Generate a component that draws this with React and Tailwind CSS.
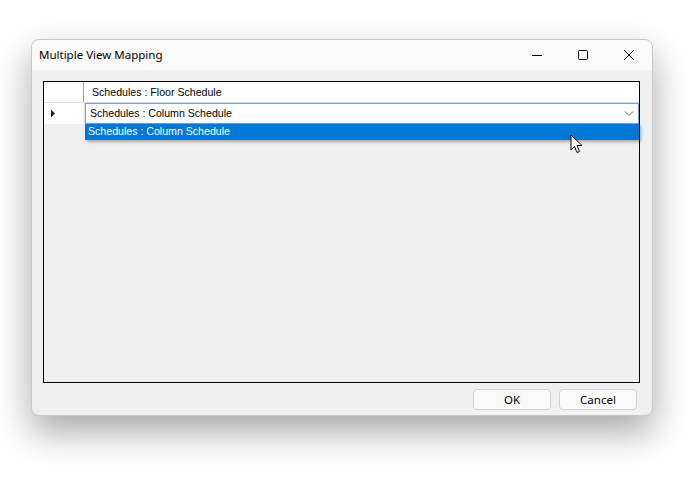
import React from 'react';

const font = { fontFamily: '"Liberation Sans", Arial, sans-serif' };
const uiFont = { fontFamily: '"Noto Sans", "Open Sans", sans-serif' };

const TitleBar = () => (
    <div className="h-[30px] flex items-center justify-between bg-[#fafafa] rounded-t-[8px]">
        <span className="pl-[7px] text-[11.5px] text-black" style={uiFont}>
            Multiple View Mapping
        </span>
        <div className="flex h-full">
            <div className="w-[46px] h-full flex items-center justify-center">
                <svg width="12" height="12" viewBox="0 0 12 12">
                    <path d="M1 6.5h10" stroke="#000" strokeWidth="1" />
                </svg>
            </div>
            <div className="w-[46px] h-full flex items-center justify-center">
                <svg width="12" height="12" viewBox="0 0 12 12">
                    <rect x="1.5" y="1.5" width="9" height="9" rx="1" fill="none" stroke="#000" strokeWidth="1" />
                </svg>
            </div>
            <div className="w-[46px] h-full flex items-center justify-center">
                <svg width="12" height="12" viewBox="0 0 12 12">
                    <path d="M1 1l10 10M11 1L1 11" stroke="#000" strokeWidth="1" />
                </svg>
            </div>
        </div>
    </div>
);

const Grid = () => (
    <div className="h-[302px] border border-black bg-[#f0f0f0] relative text-[10.6px] text-black" style={font}>
        <div className="flex h-[21px] bg-white border-b border-[#e0e0e0]">
            <div className="w-[40px] border-r border-[#a0a0a0]"></div>
            <div className="flex-1 flex items-center pl-[8px] pt-[1px]">Schedules : Floor Schedule</div>
        </div>
        <div className="flex h-[21px] bg-white">
            <div className="w-[41px] flex items-center pl-[6px] border-r border-[#e0e0e0]">
                <svg width="6" height="9" viewBox="0 0 6 9">
                    <path d="M1 0.5L5 4.5L1 8.5Z" fill="#222" />
                </svg>
            </div>
            <div className="flex-1 flex items-center justify-between pl-[4px] pr-[4px] pt-[1px] border border-[#7a9cc6] bg-white">
                <span>Schedules : Column Schedule</span>
                <svg width="10" height="6" viewBox="0 0 10 6">
                    <path d="M1 0.5L5 4.5L9 0.5" fill="none" stroke="#606060" strokeWidth="1" />
                </svg>
            </div>
        </div>
        <div className="absolute left-[41px] right-0 top-[42px] h-[16px] bg-[#0078d7] text-white flex items-center pl-[3px] shadow-[2px_2px_3px_rgba(0,0,0,0.3)]">
            Schedules : Column Schedule
        </div>
        <svg className="absolute left-[526px] top-[52px]" width="14" height="21" viewBox="0 0 14 21">
            <path d="M1 1L1 16L4.5 12.5L7 18.5L9.5 17.5L7 11.5L12 11.5Z" fill="#fff" stroke="#000" strokeWidth="1" strokeLinejoin="round" />
        </svg>
    </div>
);

const Button = ({ children }) => (
    <button className="w-[78px] h-[21px] rounded-[4px] border border-[#d0d0d0] bg-[#fbfbfb] text-[11.5px] text-black flex items-center justify-center" style={uiFont}>
        {children}
    </button>
);

export default function App() {
    return (
        <div className="w-[693px] h-[480px] bg-white pt-[39px] pl-[31px]">
            <div className="w-[622px] h-[377px] bg-[#f0f0f0] rounded-[8px] border border-[#c8c8c8] shadow-[0_16px_36px_rgba(0,0,0,0.35)] flex flex-col">
                <TitleBar />
                <div className="flex-1 flex flex-col pl-[11px] pr-[12px] pt-[11px]">
                    <Grid />
                    <div className="flex justify-end gap-[8px] pt-[6px] pr-[3px]">
                        <Button>OK</Button>
                        <Button>Cancel</Button>
                    </div>
                </div>
            </div>
        </div>
    );
}
